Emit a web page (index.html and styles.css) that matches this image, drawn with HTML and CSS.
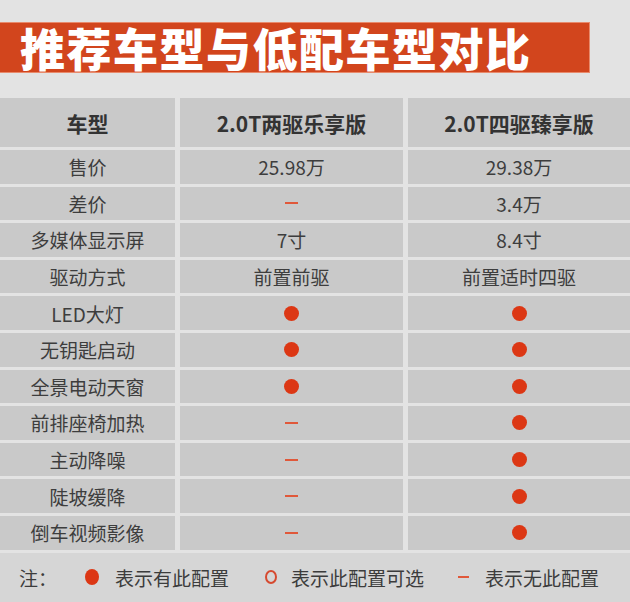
FILE: index.html
```html
<!DOCTYPE html>
<html lang="zh">
<head>
<meta charset="utf-8">
<link rel="stylesheet" href="styles.css">
</head>
<body>
<div class="page">
  <div class="banner"><span class="title">推荐车型与低配车型对比</span></div>
  <div class="table">
    <div class="cell head">车型</div>
    <div class="cell head">2.0T两驱乐享版</div>
    <div class="cell head">2.0T四驱臻享版</div>

    <div class="cell">售价</div><div class="cell">25.98万</div><div class="cell">29.38万</div>
    <div class="cell">差价</div><div class="cell"><span class="dash"></span></div><div class="cell">3.4万</div>
    <div class="cell">多媒体显示屏</div><div class="cell">7寸</div><div class="cell">8.4寸</div>
    <div class="cell">驱动方式</div><div class="cell">前置前驱</div><div class="cell">前置适时四驱</div>
    <div class="cell">LED大灯</div><div class="cell"><span class="dot"></span></div><div class="cell"><span class="dot"></span></div>
    <div class="cell">无钥匙启动</div><div class="cell"><span class="dot"></span></div><div class="cell"><span class="dot"></span></div>
    <div class="cell">全景电动天窗</div><div class="cell"><span class="dot"></span></div><div class="cell"><span class="dot"></span></div>
    <div class="cell">前排座椅加热</div><div class="cell"><span class="dash"></span></div><div class="cell"><span class="dot"></span></div>
    <div class="cell">主动降噪</div><div class="cell"><span class="dash"></span></div><div class="cell"><span class="dot"></span></div>
    <div class="cell">陡坡缓降</div><div class="cell"><span class="dash"></span></div><div class="cell"><span class="dot"></span></div>
    <div class="cell">倒车视频影像</div><div class="cell"><span class="dash"></span></div><div class="cell"><span class="dot"></span></div>
  </div>
  <div class="legend">
    <span class="note">注：</span>
    <span class="item"><span class="dot"></span>表示有此配置</span>
    <span class="item item-opt"><span class="ring"></span>表示此配置可选</span>
    <span class="item item-none"><span class="dash"></span>表示无此配置</span>
  </div>
</div>
</body>
</html>
```
FILE: styles.css
```css
html, body {
  margin: 0;
  padding: 0;
  background: #e3e3e3;
}
body {
  font-family: "Noto Sans CJK SC", "Noto Sans", sans-serif;
  color: #3c3c3c;
}
.page {
  width: 630px;
  height: 602px;
  overflow: hidden;
  padding-top: 22px;
  box-sizing: border-box;
}
.banner {
  width: 590px;
  height: 51px;
  box-sizing: border-box;
  background: #d2451d;
  border: 1px solid #e88a6c;
  border-left: none;
  display: flex;
  align-items: center;
  padding-left: 20px;
}
.title {
  color: #fff;
  font-size: 45px;
  font-weight: 900;
  line-height: 1;
  letter-spacing: 1.5px;
}
.table {
  margin-top: 25px;
  display: grid;
  grid-template-columns: 175px 223px 1fr;
  grid-template-rows: 49px;
  grid-auto-rows: 33.6px;
  column-gap: 5px;
  row-gap: 3px;
}
.cell {
  background: #c9c9c9;
  display: flex;
  align-items: center;
  justify-content: center;
  font-size: 19px;
  color: #3d3d3d;
  white-space: nowrap;
}
.cell.head {
  font-size: 21px;
  font-weight: 700;
  color: #333;
}
.dot {
  display: inline-block;
  width: 15px;
  height: 15px;
  border-radius: 50%;
  background: #dc3714;
}
.dash {
  display: inline-block;
  width: 13px;
  height: 2px;
  background: #e0583a;
}
.ring {
  display: inline-block;
  width: 12px;
  height: 14px;
  box-sizing: border-box;
  border-radius: 50%;
  border: 2px solid #d64a30;
}
.legend {
  margin-top: 3px;
  height: 49px;
  background: #d6d6d6;
  display: flex;
  align-items: center;
  font-size: 19px;
  color: #3c3c3c;
  padding-left: 19px;
}
.note {
  margin-right: 28px;
}
.item {
  display: flex;
  align-items: center;
}
.item .dot {
  width: 14px;
  height: 16px;
  margin-right: 16px;
}
.item-opt {
  margin-left: 36px;
}
.item-none {
  margin-left: 22px;
}
.item .ring {
  margin-right: 14px;
}
.item .dash {
  width: 11px;
  margin-left: 12px;
  margin-right: 16px;
}
```
